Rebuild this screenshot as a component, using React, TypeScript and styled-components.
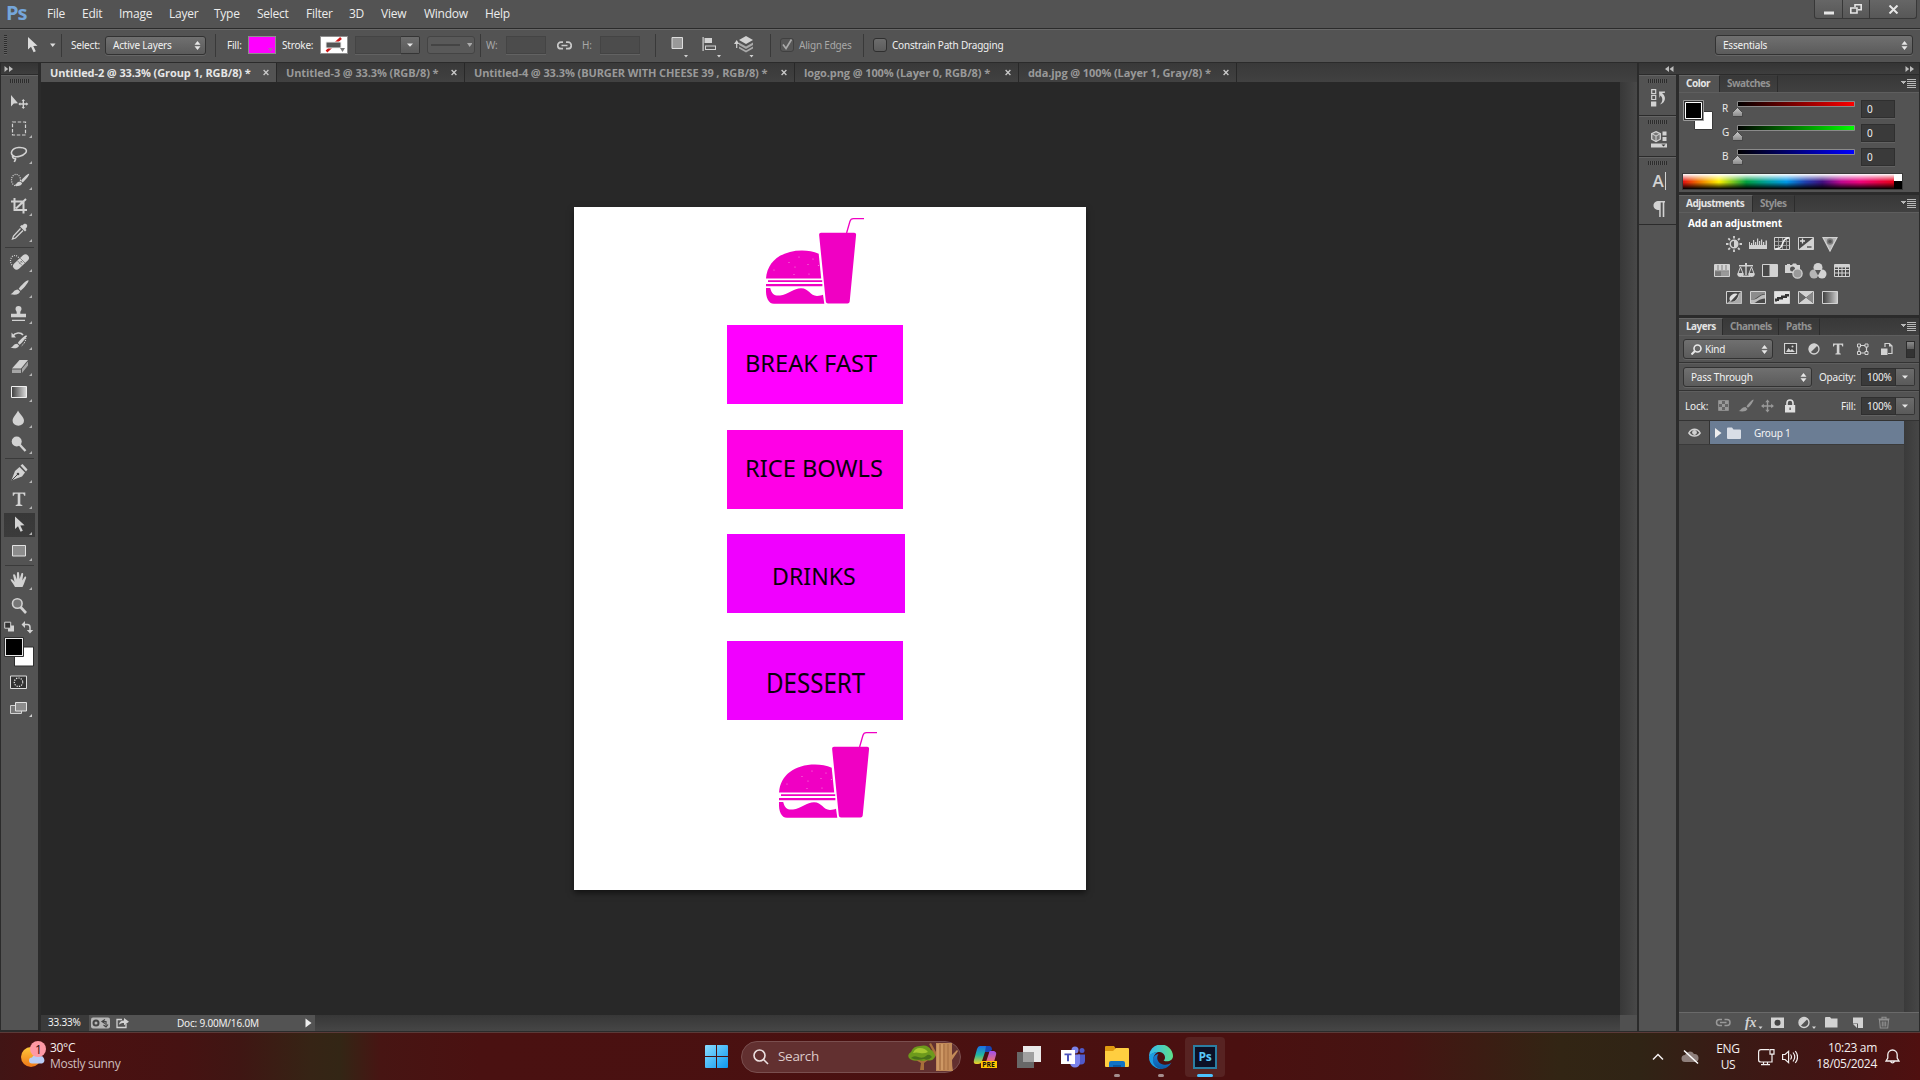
import React from 'react';
import styled, { createGlobalStyle } from 'styled-components';

const Global = createGlobalStyle`
  * { box-sizing: border-box; }
  html, body { margin: 0; padding: 0; overflow: hidden; background: #282828; }
  svg { display: block; flex: none; }
`;

const LIGHT = '#d2d2d2';
const EDGE = '#2b2b2b';

/* ---------- shell ---------- */
const Shell = styled.div`
  width: 1920px;
  height: 1080px;
  display: flex;
  flex-direction: column;
  background: #535353;
  color: #e4e4e4;
  font: 400 10px/14px "Noto Sans", "Open Sans", sans-serif;
  letter-spacing: -0.2px;
  white-space: nowrap;
`;
const Workspace = styled.div`
  display: flex;
  height: 969px;
  flex: none;
  background: ${EDGE};
`;

/* ---------- menu bar ---------- */
const MenuBar = styled.header`
  height: 29px;
  flex: none;
  display: flex;
  border-bottom: 1px solid ${EDGE};
`;
const AppLogo = styled.div`
  width: 47px;
  padding-left: 6px;
  color: #75a6da;
  font: 700 20px/26px "Open Sans", sans-serif;
  letter-spacing: -1px;
`;
const MenuItem = styled.div<{ $w: number }>`
  width: ${(p) => p.$w}px;
  font: 400 12px/28px "Open Sans", sans-serif;
  letter-spacing: -0.25px;
  color: #ececec;
`;
const WindowButtons = styled.div`
  margin-left: auto;
  margin-right: 3px;
  display: flex;
  height: 19px;
  border: 1px solid #383838;
  border-top: 0;
  border-radius: 0 0 3px 3px;
  background: linear-gradient(#666, #575757);
`;
const WindowButton = styled.div<{ $w: number }>`
  width: ${(p) => p.$w}px;
  display: flex;
  align-items: center;
  justify-content: center;
  border-right: 1px solid #383838;
  &:last-child { border-right: 0; }
`;

/* ---------- options bar ---------- */
const OptionsBar = styled.div`
  height: 34px;
  flex: none;
  display: flex;
  align-items: center;
  border-top: 1px solid #686868;
  border-bottom: 1px solid ${EDGE};
  padding: 0 0 2px 4px;
`;
const Slot = styled.div<{ $w: number; $dim?: boolean }>`
  width: ${(p) => p.$w}px;
  flex: none;
  display: flex;
  align-items: center;
  color: ${(p) => (p.$dim ? '#a8a8a8' : '#f0f0f0')};
`;
const VGrip = styled.div`
  width: 3px;
  height: 20px;
  background: repeating-linear-gradient(#2c2c2c 0 1px, #606060 1px 2px);
`;
const HGrip = styled.div`
  width: 19px;
  height: 4px;
  background: repeating-linear-gradient(90deg, #2c2c2c 0 1px, #5b5b5b 1px 2px);
`;
const Divider = styled.div`
  width: 1px;
  height: 23px;
  flex: none;
  background: #393939;
`;
const Select = styled.div<{ $w: number; $h: number }>`
  width: ${(p) => p.$w}px;
  height: ${(p) => p.$h}px;
  flex: none;
  display: flex;
  align-items: center;
  justify-content: space-between;
  padding: 0 4px 0 7px;
  border: 1px solid #323232;
  border-radius: 3px;
  background: linear-gradient(#707070, #5b5b5b);
  box-shadow: 0 1px 0 #666;
  color: #f2f2f2;
`;
const Swatch = styled.div<{ $c: string }>`
  width: 28px;
  height: 18px;
  flex: none;
  border: 1px solid #8e8e8e;
  background: ${(p) => p.$c};
`;
const Field = styled.div<{ $w: number; $h?: number; $dim?: boolean; $pad?: number }>`
  width: ${(p) => p.$w}px;
  height: ${(p) => p.$h ?? 18}px;
  flex: none;
  padding-left: ${(p) => p.$pad ?? 5}px;
  line-height: ${(p) => (p.$h ?? 18) - 2}px;
  border: 1px solid ${(p) => (p.$dim ? '#444' : '#2f2f2f')};
  background: ${(p) => (p.$dim ? '#4c4c4c' : '#3a3a3a')};
  box-shadow: 0 1px 0 #626262;
  color: #f0f0f0;
`;
const DropButton = styled.div<{ $w?: number }>`
  width: ${(p) => p.$w ?? 19}px;
  height: 18px;
  flex: none;
  display: flex;
  align-items: center;
  justify-content: center;
  border: 1px solid #353535;
  border-left: 0;
  border-radius: 0 2px 2px 0;
  background: linear-gradient(#6c6c6c, #5a5a5a);
`;
const LineStyle = styled.div`
  width: 48px;
  height: 18px;
  display: flex;
  align-items: center;
  gap: 1px;
  padding-left: 3px;
  border: 1px solid #444;
  border-radius: 3px;
  background: #595959;
`;
const Check = styled.div<{ $dim?: boolean }>`
  width: 14px;
  height: 14px;
  display: flex;
  align-items: center;
  justify-content: center;
  border: 1px solid ${(p) => (p.$dim ? '#404040' : '#2f2f2f')};
  border-radius: 3px;
  background: ${(p) => (p.$dim ? '#565656' : 'linear-gradient(#6d6d6d, #5c5c5c)')};
`;

/* ---------- tool column ---------- */
const ToolColumn = styled.aside`
  width: 37px;
  margin: 0 3px 2px 1px;
  display: flex;
  flex-direction: column;
  background: #535353;
`;
const Collapse = styled.div<{ $justify?: string }>`
  height: 12px;
  flex: none;
  display: flex;
  align-items: center;
  justify-content: ${(p) => p.$justify ?? 'flex-start'};
  padding: 0 4px 0 3px;
  background: linear-gradient(#343434, #3e3e3e);
  border-bottom: 1px solid ${EDGE};
`;
const GripRow = styled.div<{ $h: number }>`
  height: ${(p) => p.$h}px;
  flex: none;
  display: flex;
  justify-content: center;
  padding-top: 3px;
  border-top: 1px solid #646464;
`;
const ToolCell = styled.div<{ $on?: boolean }>`
  height: 26px;
  flex: none;
  margin: 0;
  background: ${(p) => (p.$on ? 'linear-gradient(#383838, #3b3b3b) 3px 1px / 31px 24px no-repeat' : 'none')};
`;
const ToolRule = styled.div<{ $h: number }>`
  height: ${(p) => p.$h}px;
  flex: none;
  display: flex;
  align-items: center;
  padding: 0 4px;
  &::before { content: ''; flex: 1; height: 1px; background: #3a3a3a; }
`;

/* ---------- document ---------- */
const DocColumn = styled.main`
  width: 1596px;
  margin-right: 2px;
  height: 968px;
  display: flex;
  flex-direction: column;
`;
const TabStrip = styled.div`
  height: 19px;
  flex: none;
  display: flex;
  background: linear-gradient(#393939, #414141);
`;
const DocTab = styled.div<{ $w: number; $on?: boolean }>`
  width: ${(p) => p.$w}px;
  display: flex;
  align-items: center;
  justify-content: space-between;
  padding: 0 7px 1px 9px;
  border-right: 1px solid #282828;
  background: ${(p) => (p.$on ? '#535353' : 'transparent')};
  color: ${(p) => (p.$on ? '#e6e6e6' : '#999')};
  font: 700 11px/17px "Open Sans", "Noto Sans", sans-serif;
  letter-spacing: -0.1px;
`;
const CanvasRow = styled.div`
  flex: 1;
  display: flex;
`;
const Pasteboard = styled.div`
  width: 1579px;
  padding: 125px 0 0 533px;
  background: #282828;
`;
const ScrollTrack = styled.div`
  width: 17px;
  background: linear-gradient(90deg, #383838, #484848);
`;
const Artboard = styled.div`
  position: relative;
  width: 512px;
  height: 683px;
  background: #fff;
  box-shadow: 0 3px 6px rgba(0, 0, 0, 0.55);
`;
const MenuCard = styled.div<{ $y: number; $w: number; $h: number; $c: string; $px: number; $py: number }>`
  position: absolute;
  left: 153px;
  top: ${(p) => p.$y}px;
  width: ${(p) => p.$w}px;
  height: ${(p) => p.$h}px;
  padding: ${(p) => p.$py}px 0 0 ${(p) => p.$px}px;
  background: ${(p) => p.$c};
`;
const CardLabel = styled.div<{ $size: number; $stretch: number }>`
  width: max-content;
  color: #0a000a;
  font: 400 ${(p) => p.$size}px/${(p) => p.$size}px "Noto Sans", sans-serif;
  letter-spacing: 0;
  transform: scaleX(${(p) => p.$stretch});
  transform-origin: 0 0;
`;
const Sticker = styled.svg<{ $x: number; $y: number }>`
  position: absolute;
  left: ${(p) => p.$x}px;
  top: ${(p) => p.$y}px;
`;
const StatusBar = styled.footer`
  height: 16px;
  flex: none;
  display: flex;
  background: linear-gradient(#373737, #464646);
`;
const ZoomField = styled.div`
  width: 48px;
  padding-left: 7px;
  line-height: 15px;
  background: #3a3a3a;
  color: #f2f2f2;
`;
const StatusInfo = styled.div`
  width: 226px;
  display: flex;
  align-items: center;
  padding-left: 2px;
  background: #535353;
  color: #f2f2f2;
`;
const Corner = styled.div`
  width: 17px;
  margin-left: auto;
  background: #505050;
`;

/* ---------- right side ---------- */
const RightSide = styled.aside`
  width: 280px;
  height: 968px;
  display: flex;
  flex-direction: column;
`;
const RightHead = styled(Collapse)`
  justify-content: space-between;
  padding: 0 5px 0 26px;
`;
const RightBody = styled.div`
  flex: 1;
  display: flex;
  gap: 3px;
`;
const Dock = styled.div`
  width: 37px;
  background: #535353;
`;
const DockGroup = styled.div<{ $h: number }>`
  height: ${(p) => p.$h}px;
  display: flex;
  flex-direction: column;
  align-items: center;
  border-bottom: 1px solid ${EDGE};
  & > ${GripRow} { width: 100%; }
`;
const DockIcon = styled.div<{ $h: number }>`
  height: ${(p) => p.$h}px;
  display: flex;
  align-items: center;
  padding-left: 3px;
`;
const DockLetter = styled.div`
  display: flex;
  gap: 1px;
  padding-right: 1px;
  border-right: 1px solid ${LIGHT};
  color: ${LIGHT};
  font: 600 17px/18px "Open Sans", sans-serif;
  letter-spacing: 0;
`;
const Panels = styled.div`
  width: 240px;
  display: flex;
  flex-direction: column;
  gap: 3px;
`;
const Panel = styled.section<{ $h: number }>`
  height: ${(p) => p.$h}px;
  display: flex;
  flex-direction: column;
  background: #535353;
`;
const PanelTabs = styled.div`
  height: 17px;
  flex: none;
  display: flex;
  align-items: stretch;
  background: linear-gradient(#383838, #404040);
`;
const PanelTab = styled.div<{ $w: number; $on?: boolean }>`
  width: ${(p) => p.$w}px;
  padding-left: 7px;
  border-right: 1px solid #2c2c2c;
  border-top: 1px solid ${(p) => (p.$on ? '#666' : '#3c3c3c')};
  background: ${(p) => (p.$on ? '#535353' : 'transparent')};
  color: ${(p) => (p.$on ? '#e4e4e4' : '#929292')};
  font: 700 10px/15px "Noto Sans", sans-serif;
  letter-spacing: -0.5px;
`;
const PanelMenu = styled.div`
  margin: 4px 3px 0 auto;
`;
const PanelBody = styled.div<{ $pad?: string }>`
  flex: 1;
  border-top: 1px solid #5e5e5e;
  padding: ${(p) => p.$pad ?? 0};
`;
const ColorGrid = styled.div`
  display: grid;
  grid-template-columns: 39px 11px 128px 34px;
  grid-template-rows: repeat(3, 24px);
  height: 73px;
`;
const ColorPair = styled.svg`
  grid-row: span 3;
`;
const ColorCell = styled.div`
  grid-column: 2;
  height: 24px;
  color: #e8e8e8;
  line-height: 17px;
`;
const Spectrum = styled.div`
  height: 15px;
  width: 212px;
  background:
    linear-gradient(#fff, rgba(255,255,255,0) 50%, rgba(0,0,0,0) 55%, #000),
    linear-gradient(90deg, #e81010, #f07000 7%, #fff200 17%, #00a040 30%, #00a0a0 40%, #0098e8 49%, #2040b0 58%, #401080 66%, #c00890 75%, #f0047c 84%, #e80018);
`;
const SpectrumRow = styled.div`
  display: flex;
  width: 221px;
  margin-left: -1px;
  border: 1px solid #3a3a3a;
  height: 17px;
`;
const SpectrumEnd = styled.div`
  width: 8px;
  background: linear-gradient(#fff 50%, #000 50%);
`;
const AdjustTitle = styled.div`
  padding: 3px 0 0 9px;
  height: 23px;
  color: #fff;
  font: 700 10px/15px "Noto Sans", sans-serif;
  letter-spacing: -0.05px;
`;
const AdjustRow = styled.div<{ $x: number; $h: number }>`
  height: ${(p) => p.$h}px;
  display: flex;
  gap: 6px;
  padding-left: ${(p) => p.$x}px;
`;
const LayerControls = styled.div<{ $h: number }>`
  height: ${(p) => p.$h}px;
  flex: none;
  display: flex;
  align-items: center;
  padding-left: 4px;
  border-bottom: 1px solid #333;
  border-top: 1px solid #5e5e5e;
  color: #e8e8e8;
`;
const KindText = styled.span`
  flex: 1;
  padding-left: 3px;
`;
const Push = styled.div<{ $w: number }>`
  width: ${(p) => p.$w}px;
  flex: none;
`;
const FilterToggle = styled.div`
  width: 9px;
  height: 17px;
  border: 1px solid #2c2c2c;
  background: linear-gradient(#8a8a8a, #5c5c5c 50%, #333 50%);
`;
const LayerList = styled.div`
  flex: 1;
  display: flex;
  background: #464646;
`;
const LayerRows = styled.div`
  width: 225px;
`;
const LayerRow = styled.div`
  height: 24px;
  display: flex;
  border-bottom: 1px solid #3a3a3a;
`;
const EyeCell = styled.div`
  width: 31px;
  display: flex;
  align-items: center;
  justify-content: center;
  background: #535353;
  border-right: 1px solid #333;
`;
const LayerName = styled.div`
  flex: 1;
  display: flex;
  align-items: center;
  padding-left: 5px;
  background: #6b7d94;
  color: #f4f4f4;
`;
const LayerScroll = styled.div`
  width: 15px;
  background: linear-gradient(90deg, #3a3a3a, #464646);
`;
const LayerFooter = styled.div`
  height: 19px;
  flex: none;
  display: flex;
  align-items: center;
  border-top: 1px solid #6a6a6a;
  padding: 2px 0 0 36px;
`;

/* ---------- taskbar ---------- */
const Taskbar = styled.nav`
  height: 48px;
  flex: none;
  display: flex;
  align-items: center;
  border-top: 1px solid #5b3a38;
  background: linear-gradient(90deg, #411515 0, #4b1111 70px, #461212 180px, #3f1613 240px, #362415 310px, #332615 340px, #471513 380px, #4a1111 480px, #4a1010 1240px, #451412 1400px, #322514 1560px, #302415 1640px, #3a1a15 1730px, #441313 1840px, #4f1010 1920px);
  font: 400 12px/16px "Open Sans", "Noto Sans", sans-serif;
  letter-spacing: -0.3px;
  color: #f4f0f0;
`;
const Weather = styled.div`
  width: 687px;
  display: flex;
  gap: 4px;
  padding-left: 20px;
`;
const WeatherText = styled.div`
  display: flex;
  flex-direction: column;
  margin-top: -1px;
  & > span { color: #cfbebe; }
`;
const SearchBox = styled.div`
  width: 220px;
  height: 32px;
  margin: 0 0 0 13px;
  display: flex;
  align-items: center;
  padding: 0 1px 0 11px;
  border: 1px solid #7a4f4f;
  border-radius: 16px;
  background: #623030;
  color: #dccaca;
  font-size: 13.5px;
  & > span { flex: 1; padding: 0 0 2px 9px; }
`;
const TaskIcon = styled.div<{ $on?: boolean }>`
  width: ${(p) => (p.$on ? 40 : 44)}px;
  height: 40px;
  display: flex;
  flex-direction: column;
  align-items: center;
  padding-top: 8px;
  border-radius: 4px;
  background: ${(p) => (p.$on ? '#572322' : 'none')};
`;
const Running = styled.div<{ $on?: boolean }>`
  width: ${(p) => (p.$on ? 16 : 6)}px;
  height: 3px;
  margin-top: 5px;
  border-radius: 2px;
  background: ${(p) => (p.$on ? '#4cc2ff' : '#a58e8e')};
`;
const PsTile = styled.div`
  width: 24px;
  height: 24px;
  border: 2px solid #2b7ea3;
  background: #0b1026;
  color: #58c8fa;
  text-align: center;
  font: 700 12px/19px "Open Sans", sans-serif;
`;
const Tray = styled.div`
  margin-left: auto;
  display: flex;
  align-items: center;
`;
const Lang = styled.div`
  width: 40px;
  text-align: center;
`;
const Clock = styled.div`
  width: 79px;
  margin-top: -1px;
  text-align: right;
`;

/* ---------- small drawings ---------- */
const UpDown = () => (
  <svg width="7" height="9" viewBox="0 0 7 9" fill="#e6e6e6"><path d="M.5 3.7 3.5 0l3 3.7zM.5 5.3h6L3.5 9z" /></svg>
);
const Down = ({ c = '#e6e6e6' }: { c?: string }) => (
  <svg width="6" height="4" viewBox="0 0 6 4" fill={c}><path d="M0 .5h6L3 3.8z" /></svg>
);
const Arrows = ({ left }: { left?: boolean }) => (
  <svg width="9" height="6" viewBox="0 0 9 6" fill="#bdbdbd">
    <path d={left ? 'M4 0v6L0 3zM8.5 0v6l-4-3z' : 'M.5 0v6l3.7-3zM5 0v6l4-3z'} />
  </svg>
);
const MenuGlyph = () => (
  <svg width="15" height="9" viewBox="0 0 15 9" fill="#b8b8b8" shapeRendering="crispEdges">
    <path d="M0 2h5L2.5 5zM6 0h9v1H6zM6 2h9v1H6zM6 4h9v1H6zM6 6h9v1H6zM6 8h9v1H6z" />
  </svg>
);
const CloseX = () => (
  <svg width="6" height="7" viewBox="0 0 6 7" stroke="#c8c8c8" strokeWidth="1.3"><path d="M.6 1l4.800 5M5.400 1 .6 6" /></svg>
);
const Arrow = () => <path d="M0 0v12.500l3-2.800 2.600 5.600 2.200-1-2.500-5.300 4.200-.3z" />;

const Tool = ({ children, on, more = true }: { children: React.ReactNode; on?: boolean; more?: boolean }) => (
  <ToolCell $on={on}>
    <svg width="37" height="26" viewBox="1 0 37 26" fill={LIGHT}>
      {children}
      {more && <path d="M32 20v3h-3z" fill="#b5b5b5" />}
    </svg>
  </ToolCell>
);
const Brush = () => (
  <>
    <path d="M28.500 5.200c-1.500-.6-7.500 5-9.800 8.600l2 1.900c3.300-2.600 8.400-9 7.800-10.500z" />
    <path d="M18 14.600l2 2c-.4 2.600-4 4-9.500 2.700 2.600-.7 3-4.600 7.500-4.700z" />
  </>
);

const Burger = ({ x, y }: { x: number; y: number }) => (
  <Sticker $x={x} $y={y} width="110" height="100" viewBox="0 0 110 100" fill="#f000c3">
    <path d="M61 22.700h33.200q2 0 1.900 2L89.700 91.500q-.2 2-2.200 2H68q-2 0-2.200-2L59.100 24.700q-.1-2 1.900-2z" />
    <path d="M86.600 23l3.300-11.500q.8-2.900 3.600-2.900H104" fill="none" stroke="#f000c3" strokeWidth="1.300" />
    <path d="M6 68.600C7 51 22 40.500 42 40.500q9 0 16.700 3.200l2.500 24.900z" />
    <path d="M8 70.300h54.200v1.700H8zM6 73.900h56.400v2.300H6z" />
    <path d="M6 78h4.200C12 85 15 86 20 85.500c8-.8 14-7.200 21-7.200 8 0 9 7.700 16 7.700 3 0 4-.5 6-1.200l1.300 8.900H14C8.500 93.700 5.500 88 6 78z" />
    <g fill="#f78fdd">
      <circle cx="39" cy="47" r=".6" /><circle cx="53" cy="49" r=".6" /><circle cx="29" cy="52.500" r=".6" />
      <circle cx="48" cy="54.500" r=".6" /><circle cx="58.500" cy="55.500" r=".6" /><circle cx="35" cy="57" r=".6" />
      <circle cx="14" cy="60" r=".6" /><circle cx="34" cy="64.500" r=".6" /><circle cx="49" cy="64" r=".6" />
    </g>
  </Sticker>
);

const Box = () => <path d="M1.500 1.500h15v12h-15z" fill="#484848" stroke={LIGHT} />;
const Adj = ({ children }: { children: React.ReactNode }) => (
  <svg width="18" height="16" viewBox="0 0 18 16" fill={LIGHT}>{children}</svg>
);

const rgb: [string, string][] = [['R', '#f00'], ['G', '#0f0'], ['B', '#00f']];
const menus: [string, number][] = [['File', 35], ['Edit', 37], ['Image', 50], ['Layer', 45], ['Type', 43], ['Select', 49], ['Filter', 43], ['3D', 32], ['View', 43], ['Window', 61], ['Help', 40]];
const tabs: [string, number][] = [
  ['Untitled-2 @ 33.3% (Group 1, RGB/8) *', 236],
  ['Untitled-3 @ 33.3% (RGB/8) *', 188],
  ['Untitled-4 @ 33.3% (BURGER WITH CHEESE 39 , RGB/8) *', 330],
  ['logo.png @ 100% (Layer 0, RGB/8) *', 224],
  ['dda.jpg @ 100% (Layer 1, Gray/8) *', 218],
];

const Options = () => (
  <OptionsBar>
    <Slot $w={23}><VGrip /></Slot>
    <Slot $w={34}>
      <svg width="30" height="18" viewBox="0 0 30 18" fill="#dcdcdc"><g transform="translate(1 1)"><Arrow /></g><path d="M23 7.500h5.500L25.700 11z" /></svg>
    </Slot>
    <Divider />
    <Slot $w={43}><Push $w={9} />Select:</Slot>
    <Select $w={101} $h={19}>Active Layers<UpDown /></Select>
    <Push $w={9} /><Divider /><Push $w={11} />
    <Slot $w={21}>Fill:</Slot>
    <Swatch $c="#f0f"><svg width="26" height="16"><path d="M19 11h5l-2.500 4z" fill="#b45ab4" /></svg></Swatch>
    <Push $w={6} />
    <Slot $w={38}>Stroke:</Slot>
    <Swatch $c="#fff">
      <svg width="26" height="16"><path d="M5.500 14.500 20 1" stroke="#d01818" strokeWidth="2.500" /><path d="M5 5h15v6H5z" fill="#555" stroke="#eee" /><path d="M19 11h5l-2.500 4z" fill="#777" /></svg>
    </Swatch>
    <Push $w={7} />
    <Field $w={46} $dim /><DropButton><Down /></DropButton>
    <Push $w={7} />
    <LineStyle><svg width="41" height="6"><path d="M0 2h29v2H0z" fill="#444" /><path d="M36 1h5.500L38.700 5z" fill="#aaa" /></svg></LineStyle>
    <Push $w={5} /><Divider /><Push $w={5} />
    <Slot $w={20} $dim>W:</Slot>
    <Field $w={40} $dim />
    <Slot $w={36}>
      <Push $w={11} />
      <svg width="15" height="9" viewBox="0 0 15 9" fill="none" stroke="#c8c8c8" strokeWidth="1.700"><path d="M6 1.200H4a3.200 3.200 0 000 6.500h2M9 1.200h2a3.200 3.200 0 010 6.500H9M4.500 4.500h6" /></svg>
    </Slot>
    <Slot $w={18} $dim>H:</Slot>
    <Field $w={40} $dim />
    <Push $w={15} /><Divider />
    <Slot $w={114}>
      <svg width="113" height="26" viewBox="656 0 113 26" fill={LIGHT}>
        <path d="M672 5.500h10.500v11H672z" fill="#999" stroke="#ddd" />
        <path d="M702.500 5h1.200v14h-1.200zM704.500 6h7.500v5h-7.500zM705 13.500h11v4.500h-11z" />
        <path d="M706 14.500h9v2.500h-9z" fill="#555" />
        <path d="M746 4l7 4-7 4-7-4z" /><path d="M739 10.500l7 4 7-4v2.500l-7 4-7-4zM739 14.500l7 4 7-4v2l-7 4-7-4z" fill="#a9a9a9" />
        <path d="M734 12l2.700-4 2.600 4h-2v4h-1.200v-4z" />
        <path d="M684 23h4l-2 2.500zM717 23h4l-2 2.500zM749.500 23h4l-2 2.500z" />
      </svg>
    </Slot>
    <Divider /><Push $w={9} />
    <Check $dim><svg width="12" height="12" viewBox="0 0 12 12" fill="none" stroke="#a9a9a9" strokeWidth="1.700"><path d="M2 5.500l3 4 5.500-9" /></svg></Check>
    <Push $w={5} />
    <Slot $w={64} $dim>Align Edges</Slot>
    <Divider /><Push $w={9} />
    <Check /><Push $w={5} />
    <Slot $w={823}>Constrain Path Dragging</Slot>
    <Select $w={198} $h={20}>Essentials<UpDown /></Select>
  </OptionsBar>
);

const Tools = () => (
  <ToolColumn>
    <Collapse><Arrows /></Collapse>
    <GripRow $h={14}><HGrip /></GripRow>
    <Tool more={false}>
      <path d="M11 6v11.500l2.800-3 4.200-.3z" />
      <path d="M23.300 10l1.700 2h-1v2.300h2.300v-1l2 1.700-2 1.700v-1H24V18h1l-1.700 2-1.700-2h1v-2.300h-2.300v1l-2-1.700 2-1.700v1h2.300V12h-1z" />
    </Tool>
    <Tool><path d="M12.500 7h13v13h-13z" fill="none" stroke={LIGHT} strokeWidth="1.200" strokeDasharray="3.500 1.700" /></Tool>
    <Tool><path d="M14.500 15.500c-6-2.500-2.500-8.500 4-9s9.500 2.600 7 5.500-9 5-11.500 3-1.500 3 .5 2.500.8 1.500-.2 3.500" fill="none" stroke={LIGHT} strokeWidth="1.600" /></Tool>
    <Tool>
      <ellipse cx="16" cy="13" rx="4.500" ry="5.700" fill="none" stroke={LIGHT} strokeWidth="1.200" strokeDasharray="1 1.200" />
      <g transform="translate(5.500 2.500) scale(.83)"><Brush /></g>
    </Tool>
    <Tool><path d="M11 8.500h12.500v12M14.500 5v12h12.500M16 15.500 26 6" fill="none" stroke={LIGHT} strokeWidth="2" /></Tool>
    <Tool>
      <path d="M22 6.500l2-1.500c2-1 4 1 3 3L25.500 10l1 1-1.500 1.500-5-5L21.500 6z" />
      <path d="M20.500 9.500l-7 7.500-1 3 3-1 7.500-7.500" fill="none" stroke={LIGHT} strokeWidth="1.300" />
    </Tool>
    <ToolRule $h={4} />
    <Tool>
      <ellipse cx="15" cy="12" rx="4.500" ry="5.500" fill="none" stroke={LIGHT} strokeWidth="1.200" strokeDasharray="1 1.200" />
      <rect x="11.500" y="9.500" width="19" height="7" rx="3.500" transform="rotate(-43 21 13)" />
      <path d="M17.500 11.800l4.800 4.800M20.200 9.200l4.800 4.800" stroke="#888" /><path d="M19.500 14.500l3-3M20.500 12l2 2" stroke="#666" strokeDasharray="1 1" />
    </Tool>
    <Tool><Brush /></Tool>
    <Tool><path d="M18.500 5a3 3 0 013 3c0 1.500-1.200 2-1.200 3.500v1.300h5.700v3.500H11v-3.500h5.700v-1.300C16.700 10 15.500 9.500 15.500 8a3 3 0 013-3zM12 18.700h13V20H12z" /></Tool>
    <Tool>
      <g transform="translate(1 3.500) scale(.9)"><Brush /></g>
      <path d="M13 9c2-3.500 8-4 10-1" fill="none" stroke={LIGHT} strokeWidth="1.600" /><path d="M11.500 5.500v5h4.500z" />
      <path d="M26 9c0 4-1 7-4.500 10" fill="none" stroke="#eee" strokeDasharray="1 1" />
    </Tool>
    <Tool><path d="M12 15.500 19.500 7H28l-7 8.500z" /><path d="M12 16.500h9V20h-9zM22 15.800l6-7.200v3.800L22 20z" fill="#a5a5a5" /></Tool>
    <Tool>
      <defs><linearGradient id="gradTool"><stop stopColor="#3c3c3c" /><stop offset="1" stopColor="#ddd" /></linearGradient></defs>
      <path d="M11.500 7.500h15v11h-15z" fill="url(#gradTool)" stroke="#eee" />
    </Tool>
    <Tool><path d="M18 5.500c1.500 3.500 6 6.500 6 10.200a5.700 5 0 01-11.400 0c0-3.700 4.200-6.700 5.400-10.200z" /></Tool>
    <Tool><circle cx="16.700" cy="10.500" r="5" /><path d="M19.500 13.500l6 6.500" stroke={LIGHT} strokeWidth="2.400" /></Tool>
    <ToolRule $h={3} />
    <Tool><path d="M20.500 5.500 22.500 4l5 5.500-1.500 2zM19.500 7l5.500 5.500-3 4-9.500 3.500-1 .5 1-3L15 11z" /><path d="M12 20l5.500-5.500" stroke="#444" /><circle cx="18" cy="14" r="1.300" fill="#444" /></Tool>
    <Tool><path d="M12.700 6.500h12.600v3.300h-1.200c-.2-1.500-.8-2-2.200-2h-1.600v9.700c0 1 .5 1.300 2 1.400v1h-6.600v-1c1.500-.1 2-.4 2-1.400V7.800h-1.600c-1.400 0-2 .5-2.200 2h-1.200z" /></Tool>
    <Tool on><g transform="translate(15 4.500)"><Arrow /></g></Tool>
    <Tool><path d="M12.500 7.500h13v10.500h-13z" fill="#8c8c8c" stroke="#e2e2e2" /></Tool>
    <ToolRule $h={3} />
    <Tool><path d="M15 20c-1-2.500-3.500-5-4.500-7.500 1.200-1 2.700.3 4 2.500L13 7.800c.8-1 1.800-.6 2.200.3l1.600 4.500L17 5.600c.8-1 1.800-.7 2 .2l.6 6.300 1.900-5.800c.9-.7 1.800 0 1.700.9l-.9 6.300 2.400-3.800c1-.5 1.700.2 1.400 1.200-1.200 3-1.900 6.100-3.600 9.100z" /></Tool>
    <Tool more={false}><circle cx="17.300" cy="10.500" r="4.800" fill="#777" stroke={LIGHT} strokeWidth="1.600" /><path d="M20.500 14l5.500 6" stroke={LIGHT} strokeWidth="2.600" /></Tool>
    <svg width="37" height="102" viewBox="1 0 37 102" fill={LIGHT}>
      <path d="M8 6.500h6v6H8z" /><path d="M4.700 3.200h6v6h-6z" fill="#333" stroke={LIGHT} />
      <path d="M24 5.500h3.500q2.500 0 2.500 3V11" fill="none" stroke={LIGHT} strokeWidth="1.500" /><path d="M21.500 5.500 25 2v7zM30 14.500 26.800 11h6.400z" />
      <path d="M14.500 28h19v19h-19z" fill="#fff" stroke="#2e2e2e" />
      <path d="M4.500 18.500h19v19h-19z" fill="#e8e8e8" stroke="#2e2e2e" /><path d="M6 20h16v16H6z" fill="#000" />
      <path d="M10.500 57h16v12.500h-16z" fill="#333" stroke="#ddd" /><circle cx="18.500" cy="63.200" r="4.200" fill="none" stroke="#eee" strokeWidth="1.200" strokeDasharray="1.200 1.200" />
      <path d="M10.500 86.500h11v8h-11z" fill="#777" stroke={LIGHT} /><path d="M15.500 83.500h11v8.500h-11z" fill="#8c8c8c" stroke="#e2e2e2" />
      <path d="M32 95v3h-3z" />
    </svg>
  </ToolColumn>
);

const Document = () => (
  <DocColumn>
    <TabStrip>
      {tabs.map(([t, w], i) => <DocTab key={t} $w={w} $on={i === 0}>{t}<CloseX /></DocTab>)}
    </TabStrip>
    <CanvasRow>
      <Pasteboard>
        <Artboard>
          <Burger x={186} y={3} />
          <MenuCard $y={118} $w={176} $h={79} $c="#ff00ff" $px={17.500} $py={26}><CardLabel $size={24} $stretch={0.985}>BREAK FAST</CardLabel></MenuCard>
          <MenuCard $y={223} $w={176} $h={79} $c="#ff00e6" $px={18} $py={26}><CardLabel $size={24} $stretch={0.985}>RICE BOWLS</CardLabel></MenuCard>
          <MenuCard $y={327} $w={178} $h={79} $c="#f000ff" $px={44.500} $py={29.500}><CardLabel $size={24} $stretch={0.965}>DRINKS</CardLabel></MenuCard>
          <MenuCard $y={434} $w={176} $h={79} $c="#f000ff" $px={39} $py={26.500}><CardLabel $size={28} $stretch={0.86}>DESSERT</CardLabel></MenuCard>
          <Burger x={199} y={517} />
        </Artboard>
      </Pasteboard>
      <ScrollTrack />
    </CanvasRow>
    <StatusBar>
      <ZoomField>33.33%</ZoomField>
      <StatusInfo>
        <svg width="40" height="12" viewBox="0 0 40 12">
          <rect y=".5" width="19" height="11" rx="2" fill="#b5b5b5" />
          <circle cx="5" cy="6" r="2.500" fill="none" stroke="#444" strokeWidth="2" /><path d="M11 4.500h4v4M14 2.500l-3 2 3 2M12.500 8l2.500 2 2-2.500" fill="none" stroke="#444" strokeWidth="1.200" />
          <path d="M31 2.500h-5v8h9V7" fill="none" stroke={LIGHT} strokeWidth="1.300" /><path d="M28 8c0-3 2-4.500 5-4.500V1l5 3.700-5 3.600V6c-2.500 0-4 .5-5 2z" fill={LIGHT} />
        </svg>
        <Slot $w={174}><Push $w={46} />Doc: 9.00M/16.0M</Slot>
        <svg width="7" height="10" fill="#eee"><path d="M.5.500 6.500 5 .5 9.500z" /></svg>
      </StatusInfo>
      <Corner />
    </StatusBar>
  </DocColumn>
);

const Adjustments = () => (
  <Panel $h={120}>
    <PanelTabs><PanelTab $w={74} $on>Adjustments</PanelTab><PanelTab $w={42}>Styles</PanelTab><PanelMenu><MenuGlyph /></PanelMenu></PanelTabs>
    <PanelBody>
      <AdjustTitle>Add an adjustment</AdjustTitle>
      <AdjustRow $x={46} $h={27}>
        <Adj><circle cx="9" cy="8" r="3.800" fill="#555" stroke={LIGHT} strokeWidth="1.500" /><path d="M9 4a4 4 0 010 8z" /><path d="M9 0v2.500M9 13.500V16M1 8h2.500M14.500 8H17M3.300 2.300 5 4M13 12l1.700 1.700M3.300 13.700 5 12M13 4l1.700-1.700" stroke={LIGHT} strokeWidth="1.800" /></Adj>
        <Adj><path d="M0 9h18v4H0zM0 6h1v4H0zM2 7h1.200v3H2zM4 4h1.200v6H4zM6 6h1.200v4H6zM8 2.500h1.200V10H8zM10 5h1.200v5H10zM12 3.500h1.200V10H12zM14 6h1.200v4H14zM16.500 4.500H18V10h-1.500z" /></Adj>
        <Adj><Box /><path d="M5.500 2v11M9.500 2v11M13.500 2v11M2 5.500h14M2 9.500h14" stroke="#999" /><path d="M2 13c7 0 7-4 8-6.500s3-4.500 6-4.500" fill="none" stroke="#f0f0f0" strokeWidth="1.600" /></Adj>
        <Adj><Box /><path d="M16.500 1.500v12h-15z" /><path d="M3 5h5M5.500 2.500v5" stroke="#ddd" strokeWidth="1.300" /><path d="M10 11h4.500" stroke="#444" strokeWidth="1.300" /></Adj>
        <Adj><path d="M2 1.500h14L9 15z" fill="#b4b4b4" stroke={LIGHT} strokeWidth="1.200" /><circle cx="9" cy="5.500" r="3.200" fill="#7c7c7c" /><circle cx="9" cy="5.500" r="1.800" fill="#555" /></Adj>
      </AdjustRow>
      <AdjustRow $x={34} $h={27}>
        <Adj><Box /><path d="M2 2h14v5.500H2z" fill="#a8a8a8" /><path d="M2 2h2v5H2zM6 2h2v5H6zM10 2h2v5h-2zM14 2h2v5h-2zM1.500 7.500h15v1h-15z" /><path d="M2 8.500h6v4.500H2z" fill="#777" /><path d="M8 8.500h8v4.500H8z" fill="#999" /></Adj>
        <Adj><path d="M8 0h2v2h6v1.500H2V2h6zM8.300 3h1.400v9H8.300zM5 12.500h8V14H5z" /><path d="M3.500 4 1 10.500h5zM14.500 4 12 10.500h5z" fill="none" stroke={LIGHT} /><path d="M0 10.500h7q-.5 3.500-3.500 3.500T0 10.500zM11 10.500h7q-.5 3.500-3.500 3.500T11 10.500z" /></Adj>
        <Adj><Box /><path d="M8.500 2h8v11h-8z" /></Adj>
        <Adj><path d="M0 2h2V1h3v1h2L8 .5h3L12 2h3v8H0z" /><circle cx="7.500" cy="6" r="2.500" fill="#555" /><circle cx="12.500" cy="10.500" r="4.600" fill="#9a9a9a" stroke={LIGHT} strokeWidth="1.300" /></Adj>
        <Adj><circle cx="9" cy="4.500" r="4.500" /><circle cx="5" cy="11" r="4.500" fill="#b5b5b5" /><circle cx="13" cy="11" r="4.500" /><path d="M9 12.500 6 7h6z" fill="#555" /></Adj>
        <Adj><Box /><path d="M2 2h14v2.500H2z" /><path d="M5.500 2v11M9 2v11M12.500 2v11M2 6.500h14M2 10h14" stroke={LIGHT} /></Adj>
      </AdjustRow>
      <AdjustRow $x={46} $h={20}>
        <Adj><Box /><path d="M16.500 1.500v12h-15z" fill="#aaa" /><ellipse cx="9" cy="7.500" rx="5" ry="3.500" transform="rotate(-35 9 7.500)" fill="#e0e0e0" /><path d="M13.500 3l-8 8.500c4 1 8-3 8-8.500z" fill="#444" /></Adj>
        <Adj><Box /><path d="M2 2h14v2C9 4 8 10 2 10z" fill="#8c8c8c" /><path d="M2 10C9 10 10 5 16 4.500v4c-6 0-8 4-11 4.500H2z" fill="#bbb" /></Adj>
        <Adj><path d="M1.500 1.500h15v12h-15z" fill="#e2e2e2" stroke={LIGHT} /><path d="M2 11.500v-3h2V7h4V5.500h4V4h4v2.500h-2V8h-4v1.500H6V11H4v.5z" fill="#333" /></Adj>
        <Adj><Box /><path d="M2 2h14L9 7.500zM2 13h14L9 7.500z" /><path d="M2 2l7 5.500L2 13z" fill="#666" /><path d="M16 2 9 7.500l7 5.500z" fill="#888" /></Adj>
        <Adj><defs><linearGradient id="gradMap"><stop stopColor="#3c3c3c" /><stop offset="1" stopColor="#ccc" /></linearGradient></defs><path d="M1.500 1.500h15v12h-15z" fill="url(#gradMap)" stroke={LIGHT} /></Adj>
      </AdjustRow>
    </PanelBody>
  </Panel>
);

const Folder = ({ c = LIGHT }: { c?: string }) => (
  <svg width="14" height="12" viewBox="0 0 14 12" fill={c}><path d="M0 1.500Q0 .5 1 .5h4l1.500 2H13q1 0 1 1V11q0 1-1 1H1q-1 0-1-1z" /></svg>
);

const Layers = () => (
  <Panel $h={713}>
    <PanelTabs><PanelTab $w={44} $on>Layers</PanelTab><PanelTab $w={56}>Channels</PanelTab><PanelTab $w={41}>Paths</PanelTab><PanelMenu><MenuGlyph /></PanelMenu></PanelTabs>
    <LayerControls $h={28}>
      <Select $w={90} $h={20}>
        <svg width="11" height="11" viewBox="0 0 11 11" fill="none" stroke="#e8e8e8" strokeWidth="1.600"><circle cx="6.500" cy="4.500" r="3.500" /><path d="M4 7 .5 10.500" strokeWidth="2" /></svg>
        <KindText>Kind</KindText><UpDown />
      </Select>
      <Push $w={11} />
      <svg width="122" height="14" viewBox="1784 0 122 14" fill={LIGHT}>
        <path d="M1784.500 1.500h12v10h-12z" fill="#444" stroke={LIGHT} strokeWidth="1.200" /><path d="M1786 10l2.500-4 2 2.500 1.500-1.500 3 3z" /><circle cx="1792.500" cy="4.500" r="1" />
        <circle cx="1814" cy="7" r="5" fill="#555" stroke={LIGHT} strokeWidth="1.300" /><path d="M1810.200 10.800a5.400 5.400 0 017.600-7.600z" />
        <path d="M1833 1.500h10.200v3h-1c-.2-1.300-.7-1.700-1.800-1.700h-1v7.700c0 .8.400 1 1.400 1.100v.9h-5.400v-.9c1-.1 1.400-.3 1.400-1.100V2.800h-1c-1.100 0-1.600.4-1.800 1.700h-1z" />
        <path d="M1859 3.500h7.500v7.500h-7.500z" fill="none" stroke={LIGHT} strokeWidth="1.200" /><path d="M1857.500 2h3v3h-3zM1865 2h3v3h-3zM1857.500 9.500h3v3h-3zM1865 9.500h3v3h-3z" fill="#555" stroke={LIGHT} />
        <path d="M1885 5V1.500h4.500L1892 4v7.500h-4" fill="none" stroke={LIGHT} strokeWidth="1.200" /><path d="M1881 6.500h6.500V13h-6.500zM1889 1v3.500h3z" />
      </svg>
      <FilterToggle />
    </LayerControls>
    <LayerControls $h={28}>
      <Select $w={129} $h={20}>Pass Through<UpDown /></Select>
      <Slot $w={49}><Push $w={7} />Opacity:</Slot>
      <Field $w={35}>100%</Field><DropButton><Down /></DropButton>
    </LayerControls>
    <LayerControls $h={30}>
      <Slot $w={34}><Push $w={2} />Lock:</Slot>
      <svg width="124" height="14" viewBox="1717 0 124 14" fill="#9a9a9a">
        <path d="M1718.500 1.500h10v10h-10z" fill="#666" stroke="#8c8c8c" /><path d="M1719 2h3v3h-3zM1725 2h3v3h-3zM1722 5h3v3h-3zM1719 8h3v3h-3zM1725 8h3v3h-3z" />
        <path d="M1753.500.5c-1.500 0-6 5-7 7l1.500 1.300c2-1.300 6-7 5.500-8.300zM1745.500 8l2 2c-1 2.500-5 3-9 2 2.500-.5 3-4 7-4z" />
        <path d="M1767.500.5l2.200 2.700h-1.500V6.300h3V4.800l2.700 2.200-2.700 2.200V7.700h-3v3.100h1.500l-2.200 2.700-2.200-2.700h1.500V7.700h-3v1.500L1761 7l2.800-2.200v1.500h3V3.200h-1.500z" />
        <path d="M1787 6V4a3 3 0 016 0v2" fill="none" stroke="#e0e0e0" strokeWidth="1.600" /><path d="M1785 6h10.200v7.500H1785z" fill="#e0e0e0" /><path d="M1789.500 8.500h1.200v2.500h-1.200z" fill="#444" />
      </svg>
      <Slot $w={20}>Fill:</Slot>
      <Field $w={35}>100%</Field><DropButton><Down /></DropButton>
    </LayerControls>
    <LayerList>
      <LayerRows>
        <LayerRow>
          <EyeCell>
            <svg width="13" height="9" viewBox="0 0 13 9" fill="none" stroke={LIGHT} strokeWidth="1.400"><path d="M.8 5Q3 1.200 6.500 1.200T12.200 5Q10 8 6.500 8T.8 5z" /><circle cx="6.500" cy="4.500" r="1.700" fill={LIGHT} /></svg>
          </EyeCell>
          <LayerName>
            <svg width="7" height="10" fill="#eee"><path d="M0 0l6.500 5L0 10z" /></svg>
            <Push $w={5} /><Folder c="#d9dee6" /><Push $w={13} />Group 1
          </LayerName>
        </LayerRow>
      </LayerRows>
      <LayerScroll />
    </LayerList>
    <LayerFooter>
      <svg width="180" height="16" viewBox="1715 0 180 16" fill={LIGHT}>
        <path d="M1722 4.500h-2.500a3 3 0 000 6h2.500M1724.500 4.500h2.500a3 3 0 010 6h-2.500M1720 7.500h6.500" fill="none" stroke="#999" strokeWidth="1.500" />
        <text x="1745" y="11.500" fontFamily="Liberation Serif, serif" fontStyle="italic" fontWeight="700" fontSize="14">fx</text>
        <path d="M1758.500 11.500h4l-2 2.500z" />
        <path d="M1771 2.500h13v10.500h-13z" /><circle cx="1777.500" cy="7.700" r="3" fill="#444" />
        <circle cx="1804" cy="7.500" r="5" fill="#555" stroke={LIGHT} strokeWidth="1.400" /><path d="M1800.300 11.200a5.300 5.300 0 017.400-7.400z" />
        <path d="M1812 11.500h4l-2 2.500zM1825 3q0-1 1-1h4l1.200 1.500h6.300v9H1825zM1853 2.500h10V13h-5V8.500h-5z" /><path d="M1853 9l4 4v-4z" />
        <path d="M1879.500 5h9l-.8 8h-7.400zM1878.500 4h11M1882 3.500v-1.300h4v1.300M1882.300 6.500v5M1884 6.500v5M1885.700 6.500v5" fill="none" stroke="#909090" strokeWidth="1.100" />
      </svg>
    </LayerFooter>
  </Panel>
);

const Right = () => (
  <RightSide>
    <RightHead><Arrows left /><Arrows /></RightHead>
    <RightBody>
      <Dock>
        <DockGroup $h={41}>
          <GripRow $h={9}><HGrip /></GripRow>
          <DockIcon $h={28}>
            <svg width="16" height="18" viewBox="0 0 16 18" fill={LIGHT}><path d="M.7.7h4v4h-4zM.7 6.500h4v4h-4z" fill="none" stroke={LIGHT} strokeWidth="1.200" /><path d="M0 12.500h5.300v5H0zM8 2.500h6v1.300l-3 .4c4 2.300 4.500 9-2 11.300 3-3 3-6.500.5-9L8.500 9z" /></svg>
          </DockIcon>
        </DockGroup>
        <DockGroup $h={41}>
          <GripRow $h={9}><HGrip /></GripRow>
          <DockIcon $h={28}>
            <svg width="16" height="17" viewBox="0 0 16 17" fill={LIGHT}><path d="M5 .7 9.300 2.700v5.500L5 10.500.7 8.200V2.700z" fill="#777" stroke={LIGHT} strokeWidth="1.300" /><path d="M.7 2.700 5 5v5.500M5 5l4.300-2.300" fill="none" stroke={LIGHT} /><path d="M11.500.5h4v4h-4zM11.500 6h4v4h-4zM0 12.500h16v4H0z" /><path d="M10.500 13.500h4l-2 2z" fill="#333" /></svg>
          </DockIcon>
        </DockGroup>
        <DockGroup $h={68}>
          <GripRow $h={9}><HGrip /></GripRow>
          <DockIcon $h={29}><DockLetter>A</DockLetter></DockIcon>
          <DockIcon $h={28}>
            <svg width="13" height="16" viewBox="0 0 13 16" fill={LIGHT}><path d="M12 0v1.500h-.7V16H9.700V1.500H7.700V16H6.200V9C2.500 9 .5 7 .5 4.500S2.500 0 6 0z" /></svg>
          </DockIcon>
        </DockGroup>
      </Dock>
      <Panels>
        <Panel $h={117}>
          <PanelTabs><PanelTab $w={41} $on>Color</PanelTab><PanelTab $w={58}>Swatches</PanelTab><PanelMenu><MenuGlyph /></PanelMenu></PanelTabs>
          <PanelBody $pad="7px 0 0 4px">
            <ColorGrid>
              <ColorPair width="34" height="34" viewBox="0 0 34 34">
                <path d="M11.500 11.500h18v18h-18z" fill="#fff" stroke="#3a3a3a" /><path d="M.5.5h20v20H.5z" fill="#2a2a2a" stroke="#9a9a9a" /><path d="M2.500 2.500h16v16h-16z" fill="#000" stroke="#fff" />
              </ColorPair>
              {rgb.map(([n, c]) => (
                <React.Fragment key={n}>
                  <ColorCell>{n}</ColorCell>
                  <svg width="126" height="20" viewBox="0 0 126 20">
                    <defs>
                      <linearGradient id={'ramp' + n}><stop /><stop offset="1" stopColor={c} /></linearGradient>
                      <linearGradient id={'thumb' + n} x2="0" y2="1"><stop stopColor="#ccc" /><stop offset="1" stopColor="#888" /></linearGradient>
                    </defs>
                    <path d="M4.500 1.500h117v5h-117z" fill={`url(#ramp${n})`} stroke="#8a8a8a" />
                    <path d="M4.500 7.500l5 5v4h-10v-4z" fill={`url(#thumb${n})`} stroke="#3c3c3c" strokeWidth=".8" />
                  </svg>
                  <Field $w={34}>0</Field>
                </React.Fragment>
              ))}
            </ColorGrid>
            <SpectrumRow><Spectrum /><SpectrumEnd /></SpectrumRow>
          </PanelBody>
        </Panel>
        <Adjustments />
        <Layers />
      </Panels>
    </RightBody>
  </RightSide>
);

const Task = () => (
  <Taskbar>
    <Weather>
      <svg width="26" height="32" viewBox="0 0 26 32">
        <defs><linearGradient id="sun" x2="0" y2="1"><stop stopColor="#ffc83a" /><stop offset="1" stopColor="#f07818" /></linearGradient></defs>
        <circle cx="11" cy="16" r="10" fill="url(#sun)" />
        <path d="M12 22.500a3 3 0 010-6 4 4 0 017-1 3.500 3.500 0 013 7z" fill="#b9cdf5" />
        <circle cx="18" cy="8" r="8" fill="#ff99a4" />
        <text x="15" y="12.500" fontFamily="Open Sans, sans-serif" fontSize="12" fill="#2a0a0a">1</text>
      </svg>
      <WeatherText>30°C<span>Mostly sunny</span></WeatherText>
    </Weather>
    <Push $w={18} />
    <svg width="23" height="23" viewBox="0 0 23 23">
      <defs><linearGradient id="win" x2="1" y2="1"><stop stopColor="#8adcff" /><stop offset="1" stopColor="#0c98f0" /></linearGradient></defs>
      <path d="M1 0h10v11H0V1q0-1 1-1zM12 0h10q1 0 1 1v10H12zM0 12h11v11H1q-1 0-1-1zM12 12h11v10q0 1-1 1H12z" fill="url(#win)" />
    </svg>
    <SearchBox>
      <svg width="16" height="16" viewBox="0 0 16 16" fill="none" stroke="#ece0e0" strokeWidth="1.600"><circle cx="6.500" cy="6.500" r="5.500" /><path d="M10.500 10.500l4.500 4.500" /></svg>
      <span>Search</span>
      <svg width="52" height="28" viewBox="0 0 52 28">
        <path d="M13 27l1-7-7-4 1-1 7 3 8-4 1 1-7 5v7z" fill="#a8703a" />
        <path d="M3 16q-4-4 1-7 2-6 9-6 8-2 11 4 6 2 4 7-3 5-8 3-4 2-8 0-5 2-9-1z" fill="#6d9a1c" />
        <path d="M6 10q2-5 7-5t8 4q-4 2-8 1t-7 0z" fill="#a5c630" /><path d="M4 15q3-3 7-1 5 2 8-1t6 1q-4 4-8 2-7 2-13-1z" fill="#47701a" />
        <path d="M29 28V0h16v12l5-5 1 1-6 9q0 7 1 11z" fill="#c28a58" /><path d="M24 0l5 9v5l-7-13z" fill="#a8703a" />
        <path d="M33 1v26M37 1v26M41 1v26" stroke="#a06a3e" strokeWidth=".9" /><path d="M35 1v26M31 1v26" stroke="#dba872" />
      </svg>
    </SearchBox>
    <Push $w={2} />
    <TaskIcon>
      <svg width="24" height="24" viewBox="0 0 24 24">
        <defs>
          <linearGradient id="copA" x2="0" y2="1"><stop stopColor="#1b6de8" /><stop offset=".5" stopColor="#22b8a0" /><stop offset="1" stopColor="#f4d020" /></linearGradient>
          <linearGradient id="copB" x2="0" y2="1"><stop stopColor="#a050f0" /><stop offset="1" stopColor="#ff7a50" /></linearGradient>
        </defs>
        <path d="M7 1h8q3 0 2 3l-1 3h-4l-3 9q-1 3-4 3H3q-3 0-2-4L4 4q1-3 3-3z" fill="url(#copA)" />
        <path d="M13 1h3q3 0 3 4l-3 2h-4z" fill="#1746b8" />
        <path d="M17 6h4q3 1 2 4l-2 7q-1 2-4 2h-7q3-1 4-5l2-6q0-1.500 1-2z" fill="url(#copB)" />
        <path d="M8 16h16v7H8z" fill="#ffc400" /><text x="9.200" y="22" fontFamily="Open Sans, sans-serif" fontWeight="700" fontSize="6.800" letterSpacing="0" fill="#111">PRE</text>
      </svg>
    </TaskIcon>
    <TaskIcon>
      <svg width="24" height="24" viewBox="0 0 24 24"><path d="M0 7h17v16H0z" fill="#686868" /><path d="M6 1h18v16H6z" fill="#e9e9e9" /><path d="M6 7h11v10H6z" fill="#a0a0a0" /></svg>
    </TaskIcon>
    <TaskIcon>
      <svg width="24" height="24" viewBox="0 0 24 24">
        <circle cx="14" cy="5" r="3.500" fill="#7b83eb" /><circle cx="21" cy="5.500" r="2.500" fill="#5059c9" />
        <path d="M17 9.500h7v6q0 4-4 4h-3z" fill="#5059c9" /><path d="M9 9.500h10v8q-.5 5-5 5t-5-5z" fill="#7b83eb" />
        <path d="M0 5h14v14H0z" fill="#fff" /><path d="M3.500 8.500h7v1.800H8v6H6v-6H3.500z" fill="#4b53bc" />
      </svg>
    </TaskIcon>
    <TaskIcon>
      <svg width="24" height="24" viewBox="0 0 24 24"><path d="M0 2q0-1 1-1h8l2 3v4H0z" fill="#e09a10" /><path d="M0 6h8l3-3h12q1 0 1 1v17q0 1-1 1H1q-1 0-1-1z" fill="#ffce40" /><path d="M4 22v-4q0-2 2-2h12q2 0 2 2v4z" fill="#1272c4" /><path d="M8 22v-2h8v2z" fill="#0a58a0" /></svg>
      <Running />
    </TaskIcon>
    <TaskIcon>
      <svg width="24" height="24" viewBox="0 0 24 24">
        <defs>
          <linearGradient id="edgeA"><stop stopColor="#35b8f0" /><stop offset="1" stopColor="#5fe08a" /></linearGradient>
          <linearGradient id="edgeB" x2="0" y2="1"><stop stopColor="#1880d8" /><stop offset="1" stopColor="#0c59a4" /></linearGradient>
        </defs>
        <path d="M0 12A12 12 0 0124 11c0 5-6 6.500-9.500 4.500 1-.7 1.500-1.700 1.500-3C16 9 13 7 9.500 7S1 9 0 12z" fill="url(#edgeA)" />
        <path d="M0 12C1 8.500 5 7 9 7c-4 2-5.500 6-4 10s5 6.500 8 7A12 12 0 010 12z" fill="#1b9de2" />
        <path d="M9.500 9C7 12 8 18 14 19.500c3 .7 6 0 8.500-2C20 22 16 24 12 24c-5-1-9-5-8-10 .5-3 3-4.500 5.500-5z" fill="url(#edgeB)" />
      </svg>
      <Running />
    </TaskIcon>
    <Push $w={2} />
    <TaskIcon $on><PsTile>Ps</PsTile><Running $on /></TaskIcon>
    <Tray>
      <svg width="55" height="20" viewBox="1650 0 55 20" fill="none" stroke="#f4f0f0" strokeWidth="1.500">
        <path d="M1653 12.500l5-5 5 5" />
        <path d="M1685 15a3.500 3.500 0 010-7 5 5 0 019-1 4 4 0 011 8z" fill="#8f807c" stroke="none" /><path d="M1684 3.500l14 13" stroke="#fff" />
      </svg>
      <Push $w={3} />
      <Lang>ENG<br />US</Lang>
      <Push $w={10} />
      <svg width="40" height="20" viewBox="1758 0 40 20" fill="none" stroke="#f4f0f0" strokeWidth="1.200">
        <path d="M1769 2.600h-8q-2.400 0-2.400 2.400v8q0 2 2.400 2h11V9M1761 17.600h9M1763.500 15v2.500M1767.500 15v2.500M1770 2.600h4v4.500h-4zM1772 7v3" />
        <path d="M1782.600 7.500h2.500l3.500-3.200v11.400l-3.500-3.200h-2.500zM1790.500 7.500q2 2.500 0 5M1793 5.500q3.500 4.500 0 9M1795.300 4q4.500 6 0 12" />
      </svg>
      <Clock>10:23 am<br />18/05/2024</Clock>
      <Push $w={8} />
      <svg width="15" height="18" viewBox="0 0 15 18" fill="none" stroke="#f4f0f0" strokeWidth="1.300"><path d="M7.500 2a4.700 4.700 0 00-4.700 4.700V10L1 13h13l-1.800-3V6.700A4.700 4.700 0 007.500 2zM5.700 13.500a1.900 1.900 0 003.600 0" /></svg>
      <Push $w={20} />
    </Tray>
  </Taskbar>
);

export default function App() {
  return (
    <Shell>
      <Global />
      <MenuBar>
        <AppLogo>Ps</AppLogo>
        {menus.map(([m, w]) => <MenuItem key={m} $w={w}>{m}</MenuItem>)}
        <WindowButtons>
          <WindowButton $w={28}><svg width="10" height="14"><path d="M0 9.500h10v3H0z" fill="#e6e6e6" /></svg></WindowButton>
          <WindowButton $w={27}><svg width="12" height="10" viewBox="0 0 12 10" fill="none" stroke="#e6e6e6" strokeWidth="1.600"><path d="M5 3V.8h6.200v5H8M.8 4h6.200v5H.8z" /></svg></WindowButton>
          <WindowButton $w={46}><svg width="11" height="9" viewBox="0 0 11 9" stroke="#e6e6e6" strokeWidth="2"><path d="M1.500.5l8 8M9.500.5l-8 8" /></svg></WindowButton>
        </WindowButtons>
      </MenuBar>
      <Options />
      <Workspace>
        <Tools />
        <Document />
        <Right />
      </Workspace>
      <Task />
    </Shell>
  );
}
